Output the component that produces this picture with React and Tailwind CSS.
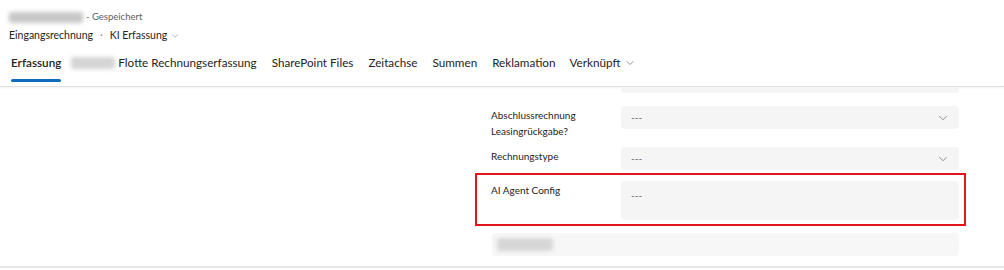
import { ChevronDown } from 'lucide-react';

const tabs = ['SharePoint Files', 'Zeitachse', 'Summen', 'Reklamation'];

function Field({ label, tall, highlighted, className }) {
  return (
    <div className={`flex items-start border-2 pl-[14px] pr-[5px] ${highlighted ? 'border-[#e3161e]' : 'border-transparent'} ${className}`}>
      <div className="w-[130px] pt-[1px] text-[10px] leading-[16px] text-[#242424]">{label}</div>
      <div className={`flex flex-1 justify-between rounded-[4px] bg-[#f5f5f5] pl-[10px] pr-[9px] text-[10px] text-[#616161] ${tall ? 'h-[39px] items-start pt-[7px]' : 'h-[23px] items-center'}`}>
        <span>---</span>
        {!tall && <ChevronDown className="w-[14px] h-[14px] text-[#707070]" strokeWidth={1.3} />}
      </div>
    </div>
  );
}

export default function App() {
  return (
    <div className="w-[1004px] h-[270px] overflow-hidden bg-white font-['Lato',sans-serif]">
      <div className="h-[87px] border-b border-[#e0e0e0] shadow-[0_1px_2px_rgba(0,0,0,0.06)] pl-[9px]">
        <div className="flex items-center h-[25px] pt-[10px] text-[9.5px] text-[#616161]">
          <div className="w-[74px] h-[11px] rounded-[2px] bg-[#c8c8c8] blur-[2px]" />
          <span className="ml-[3px]">- Gespeichert</span>
        </div>
        <div className="flex items-center h-[22px] text-[10.5px] text-[#242424]">
          <span>Eingangsrechnung</span>
          <span className="mx-[7px] text-[#8a8a8a]">·</span>
          <span>KI Erfassung</span>
          <ChevronDown className="ml-[3px] w-[10px] h-[10px] text-[#8a8a8a]" strokeWidth={1.5} />
        </div>
        <div className="flex items-start h-[40px] pt-[7px] pl-[2px] text-[11.7px] text-[#242424]">
          <div className="flex flex-col">
            <span className="font-semibold">Erfassung</span>
            <div className="mt-[7px] h-[3px] w-[50px] rounded-full bg-[#0f6cbd]" />
          </div>
          <div className="ml-[10px] mt-[3px] w-[44px] h-[12px] rounded-[2px] bg-[#d4d4d4] blur-[2px]" />
          <span className="ml-[3px]">Flotte Rechnungserfassung</span>
          {tabs.map((t) => (
            <span key={t} className="ml-[15px]">{t}</span>
          ))}
          <span className="ml-[14px] flex items-center">
            Verknüpft
            <ChevronDown className="ml-[4px] w-[12px] h-[12px] text-[#616161]" strokeWidth={1.4} />
          </span>
        </div>
      </div>

      <div className="flex h-[181px] border-b-2 border-[#e6e6e6]">
        <div className="w-[475px]" />
        <div className="w-[491px] flex flex-col">
          <div className="ml-[146px] mr-[7px] h-[6px] rounded-b-[4px] bg-[#f5f5f5]" />
          <div className="mt-[9px]">
            <Field label={<>Abschlussrechnung<br />Leasingrückgabe?</>} className="pt-[2px]" />
          </div>
          <Field label="Rechnungstype" className="pt-[4px] mb-[1px]" />
          <Field label="AI Agent Config" tall highlighted className="pt-[6px] pb-[4px]" />
          <div className="mt-[7px] ml-[17px] mr-[7px] h-[23px] rounded-[4px] bg-[#f7f7f7] flex items-center pl-[5px]">
            <div className="w-[56px] h-[13px] rounded-[3px] bg-[#d6d6d6] blur-[2px]" />
          </div>
        </div>
      </div>
    </div>
  );
}
